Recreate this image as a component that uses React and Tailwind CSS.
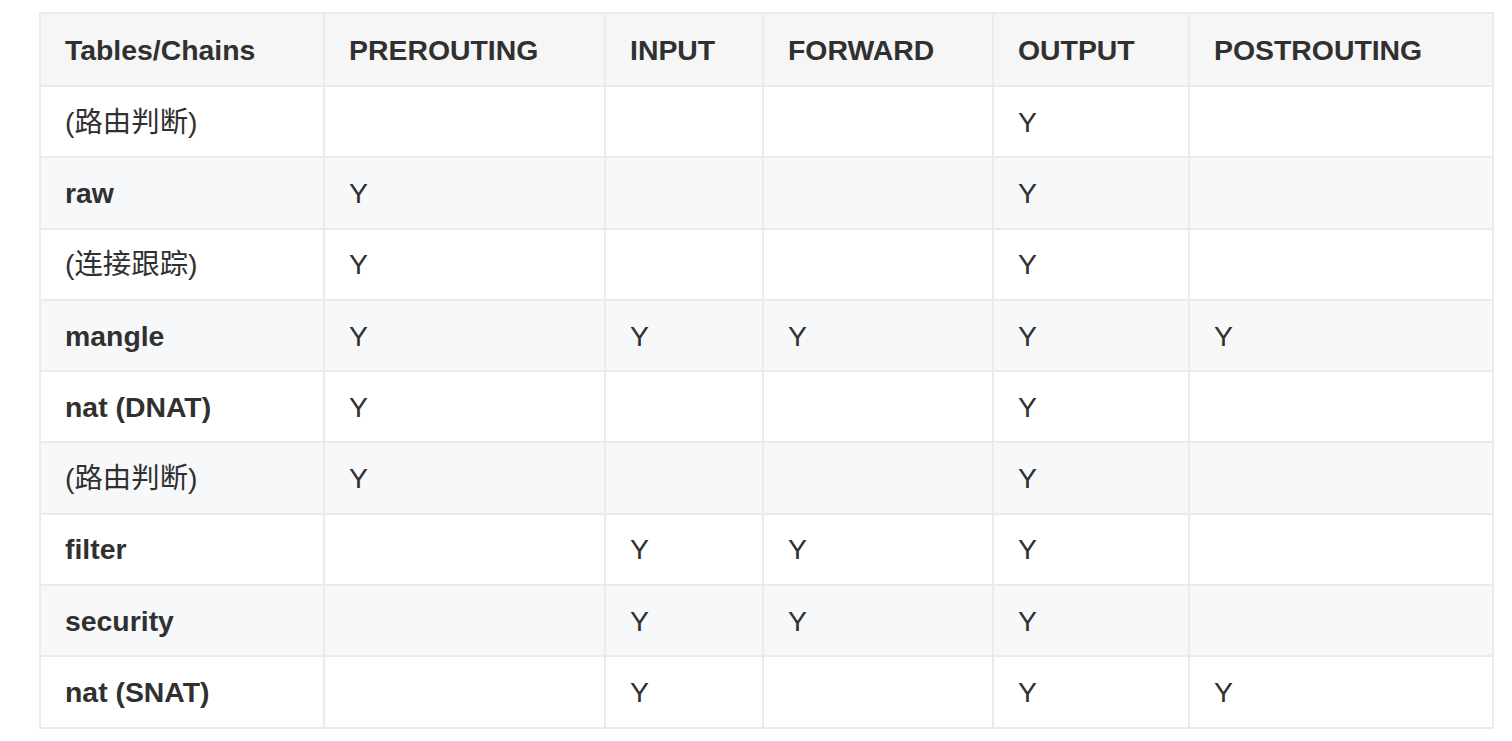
import React from "react";

const cols = ["Tables/Chains", "PREROUTING", "INPUT", "FORWARD", "OUTPUT", "POSTROUTING"];
const widths = ["w-[284px]", "w-[281px]", "w-[158px]", "w-[230px]", "w-[196px]", "w-[304px]"];

const rows = [
  { name: "(路由判断)", bold: false, v: [0, 0, 0, 1, 0] },
  { name: "raw", bold: true, v: [1, 0, 0, 1, 0] },
  { name: "(连接跟踪)", bold: false, v: [1, 0, 0, 1, 0] },
  { name: "mangle", bold: true, v: [1, 1, 1, 1, 1] },
  { name: "nat (DNAT)", bold: true, v: [1, 0, 0, 1, 0] },
  { name: "(路由判断)", bold: false, v: [1, 0, 0, 1, 0] },
  { name: "filter", bold: true, v: [0, 1, 1, 1, 0] },
  { name: "security", bold: true, v: [0, 1, 1, 1, 0] },
  { name: "nat (SNAT)", bold: true, v: [0, 1, 0, 1, 1] },
];

export default function App() {
  return (
    <div className="min-h-[741px] w-[1512px] bg-white pl-[39px] pt-[12px] text-[#303030] text-[28.4px] leading-[42px] [font-family:'Liberation_Sans','Noto_Sans_CJK_SC',sans-serif]">
      <table className="w-[1455px] table-fixed border-collapse border-2 border-[#ebebeb]">
        <colgroup>
          {widths.map((w, i) => (
            <col key={i} className={w} />
          ))}
        </colgroup>
        <thead>
          <tr className="h-[73px] bg-[#f6f6f6]">
            {cols.map((c) => (
              <th key={c} className="border-2 border-[#ebebeb] px-[24px] text-left font-bold">
                {c}
              </th>
            ))}
          </tr>
        </thead>
        <tbody>
          {rows.map((r, i) => (
            <tr key={i} className={`h-[71.3px] ${i % 2 === 1 ? "bg-[#f7f8fa]" : "bg-white"}`}>
              <td className={`border-2 border-[#ebebeb] px-[24px] ${r.bold ? "font-bold" : "font-normal"}`}>
                {r.name}
              </td>
              {r.v.map((y, j) => (
                <td key={j} className="border-2 border-[#ebebeb] px-[24px]">
                  {y ? "Y" : ""}
                </td>
              ))}
            </tr>
          ))}
        </tbody>
      </table>
    </div>
  );
}
